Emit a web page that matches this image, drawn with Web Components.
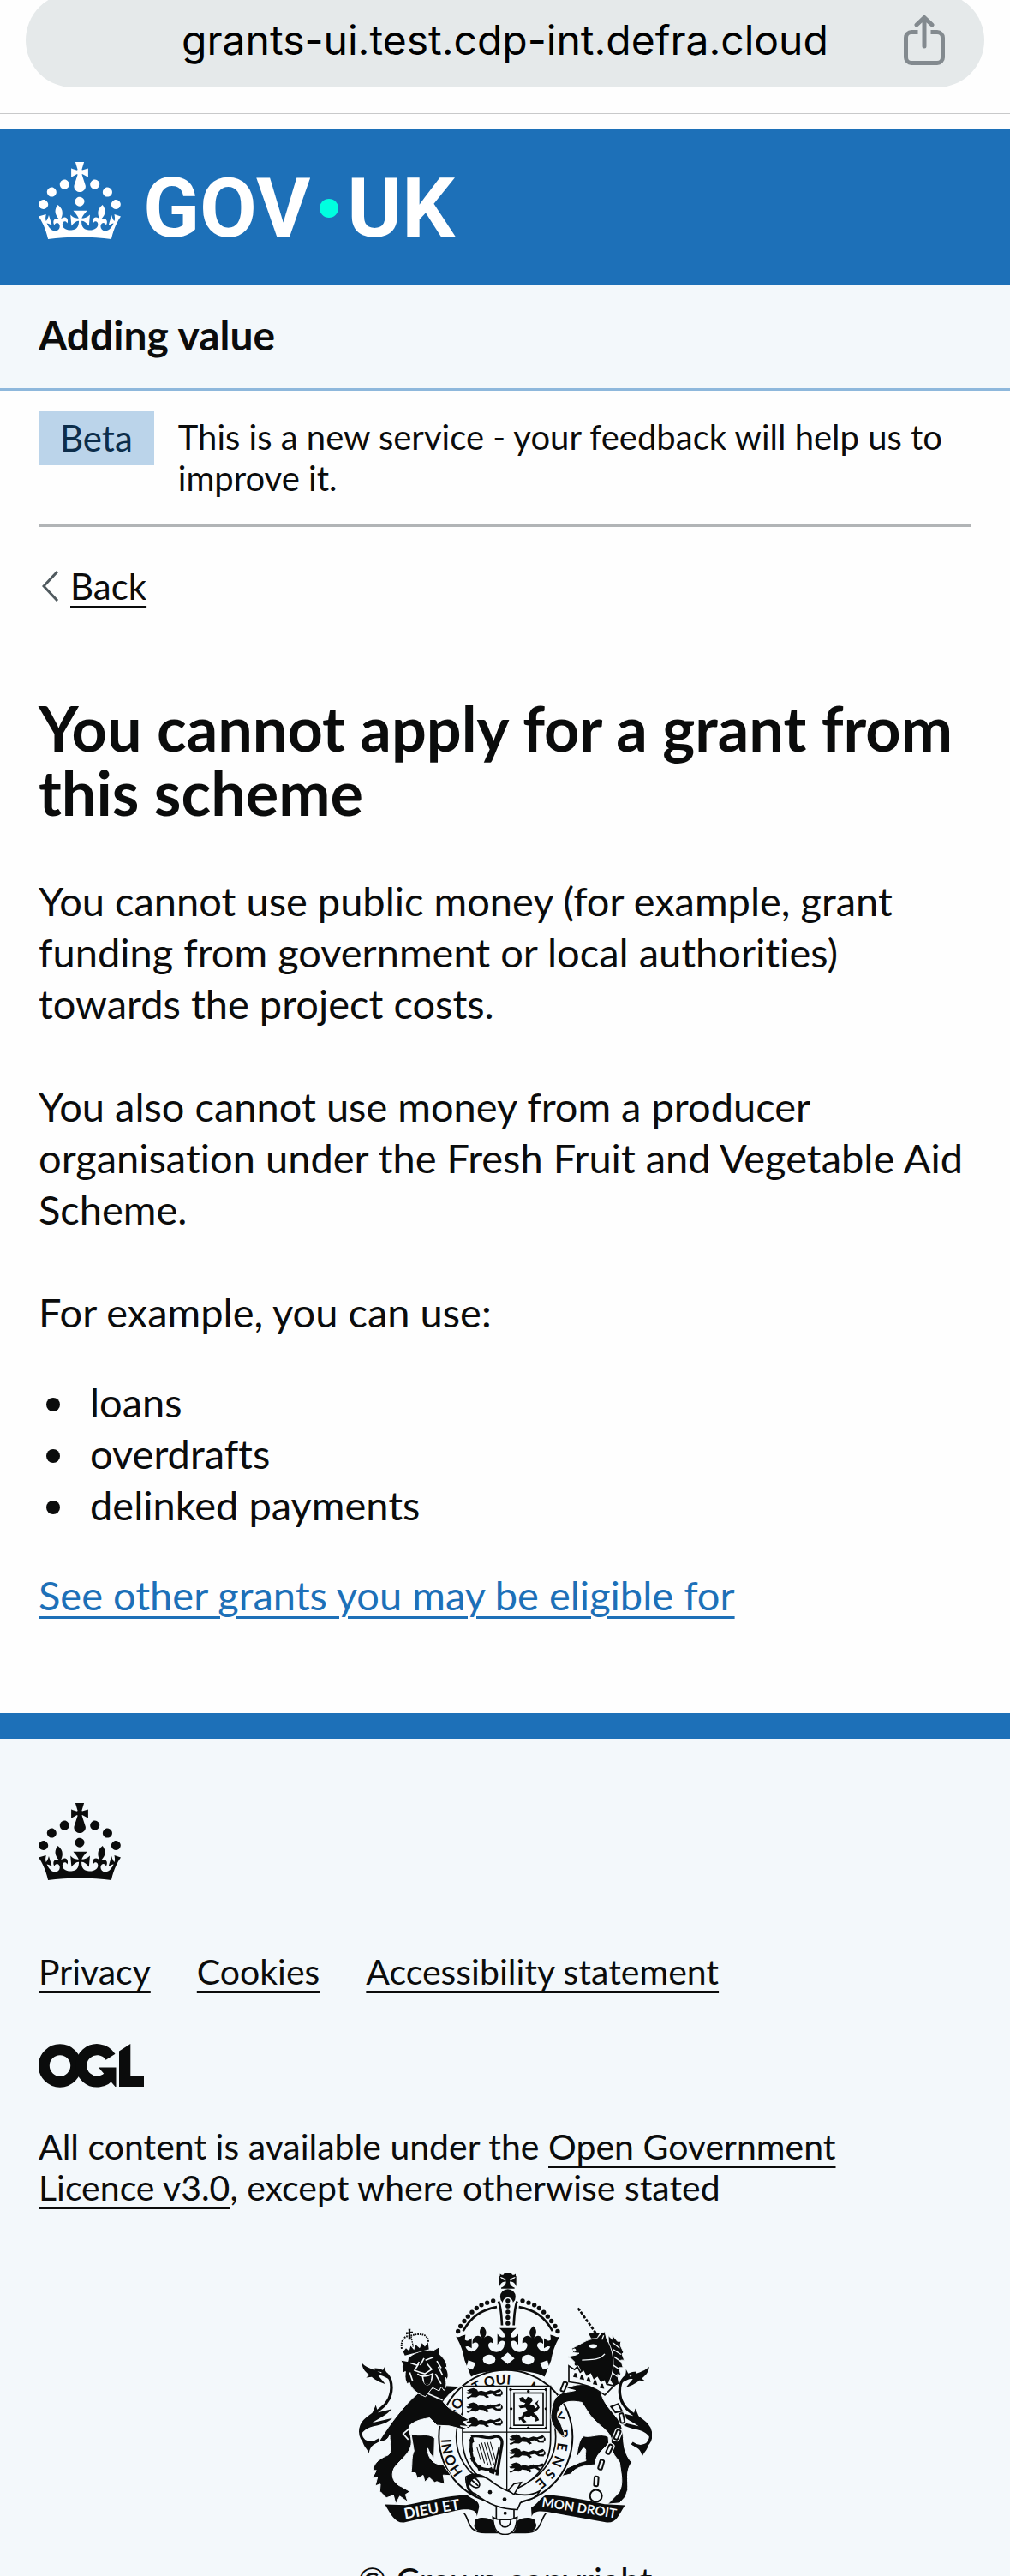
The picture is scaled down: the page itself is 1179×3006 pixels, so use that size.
<!DOCTYPE html>
<html lang="en">
<head>
<meta charset="utf-8">
<meta name="viewport" content="width=device-width, initial-scale=1">
<title>You cannot apply for a grant from this scheme</title>
<style>
:root{
  --blue:#1d70b8; --ink:#0b0c0c; --tint:#f3f8fb; --grey:#b1b4b6;
  --gutter:45px; --rule:3px;
  --body:47px; --body-line:60px;
  --small:41px; --small-line:48px;
}
body{margin:0;background:#fefefe;color:var(--ink);font-family:Lato,"Open Sans",sans-serif;font-variant-ligatures:none;font-size:var(--body);line-height:var(--body-line)}
main{display:block;padding:102px var(--gutter) 108px}
h1{margin:0 0 59px;font-size:72px;line-height:75px;font-weight:700}
main p{margin:0 0 60px}
main p.lead-in{margin-bottom:45px}
main ul{margin:0 0 45px;padding:0;list-style:none}
main li{display:flex;align-items:center}
main li::before{content:"";width:16px;height:16px;border-radius:50%;background:currentColor;margin:5px 35px 0 9px}
main p:last-child{margin:0}
</style>
</head>
<body>
<browser-bar address="grants-ui.test.cdp-int.defra.cloud"></browser-bar>
<gov-header></gov-header>
<service-bar>Adding value</service-bar>
<phase-banner phase="Beta">This is a new service - your feedback will help us to improve it.</phase-banner>
<back-link href="#back">Back</back-link>
<main>
  <h1>You cannot apply for a grant from this scheme</h1>
  <p>You cannot use public money (for example, grant funding from government or local authorities) towards the project costs.</p>
  <p>You also cannot use money from a producer organisation under the Fresh Fruit and Vegetable Aid Scheme.</p>
  <p class="lead-in">For example, you can use:</p>
  <ul><li>loans</li><li>overdrafts</li><li>delinked payments</li></ul>
  <p><text-link href="#grants">See other grants you may be eligible for</text-link></p>
</main>
<gov-footer>
  <text-link slot="links" kind="dark" href="#privacy">Privacy</text-link>
  <text-link slot="links" kind="dark" href="#cookies">Cookies</text-link>
  <text-link slot="links" kind="dark" href="#accessibility">Accessibility statement</text-link>
  <span slot="licence">All content is available under the <text-link kind="dark" href="#ogl">Open Government Licence&nbsp;v3.0</text-link>, except where otherwise stated</span>
  <text-link slot="copyright" kind="plain" href="#copyright">© Crown copyright</text-link>
</gov-footer>

<script>
const define = (name, render) => customElements.define(name, class extends HTMLElement {
  connectedCallback() {
    if (!this.shadowRoot) this.attachShadow({mode: 'open'}).innerHTML = render(this);
  }
});

define('text-link', el => `<style>
:host{display:inline;color:var(--blue)}
:host([kind]){color:var(--ink)}
a{color:inherit;text-decoration:underline;text-decoration-thickness:var(--rule);text-underline-offset:7px}
:host([kind=plain]) a{text-decoration:none}
</style><a href="${el.getAttribute('href')}"><slot></slot></a>`);

define('browser-bar', el => `<style>
:host{display:block;height:132px;overflow:hidden;border-bottom:1px solid #c8c9ca;margin-bottom:17px}
.pill{display:grid;grid-template-columns:1fr auto 1fr;align-items:center;height:110px;margin:-8px 30px 0;border-radius:60px;background:#e5e9ea;padding:0 46px}
button{border:0;background:none;padding:0;margin:0;color:#000;font:48px/60px Inter,sans-serif}
.address{grid-column:2}
.share{justify-self:end;display:flex}
svg{width:48px;height:58px;fill:none;stroke:#838a8f;stroke-width:5;stroke-linecap:butt}
</style><div class="pill"><button class="address">${el.getAttribute('address')}</button>
<button class="share" aria-label="Share"><svg viewBox="0 0 48 58"><path d="M16.500 19.500H9a6.500 6.500 0 0 0-6.500 6.500v23a6.500 6.500 0 0 0 6.500 6.500h30a6.500 6.500 0 0 0 6.500-6.500V26a6.500 6.500 0 0 0-6.500-6.500h-7.500"/><path d="M24 3v33M15 11l9-8.500 9 8.500" stroke-linecap="round" stroke-linejoin="round"/></svg></button></div>`);

define('gov-crown', () => `<style>:host{display:block}svg{display:block;width:96px;height:90px;fill:currentColor}</style>
<svg viewBox="0 0 32 30" aria-hidden="true"><path d="M22.600 10.400c-1 .4-2-.1-2.400-1-.4-.9.1-2 1-2.400.9-.4 2 .1 2.400 1s-.1 2-1 2.400m-5.900 6.700c-.9.4-2-.1-2.400-1-.4-.9.1-2 1-2.400.9-.4 2 .1 2.400 1s-.1 2-1 2.400m10.800-3.700c-1 .4-2-.1-2.400-1-.4-.9.1-2 1-2.400.9-.4 2 .1 2.400 1s0 2-1 2.400m3.300 4.800c-1 .4-2-.1-2.400-1-.4-.9.1-2 1-2.400.9-.4 2 .1 2.400 1s-.1 2-1 2.400M17 4.700l2.300 1.200V2.500l-2.300.7-.2-.2.9-3h-3.400l.9 3-.2.2c-.1.1-2.300-.7-2.300-.7v3.400L15 4.700c.1.1.1.2.2.2l-1.300 4c-.1.2-.1.4-.1.6 0 1.100.8 2 1.900 2.200h.7c1-.2 1.900-1.100 1.900-2.100 0-.2 0-.4-.1-.6l-1.300-4c-.1-.2 0-.2.1-.3m-7.600 5.700c.9.4 2-.1 2.400-1 .4-.9-.1-2-1-2.400-.9-.4-2 .1-2.400 1s0 2 1 2.400m-5 3c.9.4 2-.1 2.400-1 .4-.9-.1-2-1-2.400-.9-.4-2 .1-2.400 1s.1 2 1 2.400m-3.200 4.800c.9.4 2-.1 2.400-1 .4-.9-.1-2-1-2.400-.9-.4-2 .1-2.400 1s0 2 1 2.400m14.800 11c4.400 0 8.600.3 12.300.8 1.100-4.500 2.400-7 3.700-8.800l-2.500-.9c.2 1.300.3 1.900 0 2.700-.4-.4-.8-1.100-1.100-2.300l-1.200 4c.7-.5 1.300-.8 2-.9-1.100 2.500-2.600 3.100-3.500 3-1.100-.2-1.700-1.200-1.500-2.100.3-1.200 1.500-1.500 2.100-.1 1.100-2.300-.8-3-2-2.300 1.900-1.900 2.100-3.500.6-5.600-2.100 1.600-2.100 3.200-1.200 5.500-1.200-1.400-3.200-.6-2.500 1.600.9-1.400 2.100-.5 1.900.8-.2 1.100-1.700 2.100-3.500 1.900-2.700-.2-2.900-2.100-2.900-3.600.7-.1 1.900.5 2.900 1.900l.4-4.300c-1.100 1.100-2.100 1.400-3.200 1.400.4-1.200 2.100-3 2.100-3h-5.400s1.700 1.900 2.100 3c-1.100 0-2.100-.2-3.200-1.400l.4 4.300c1-1.400 2.200-2 2.900-1.900-.1 1.500-.2 3.400-2.900 3.600-1.900.2-3.400-.8-3.500-1.900-.2-1.300 1-2.200 1.900-.8.7-2.300-1.200-3-2.500-1.600.9-2.200.9-3.900-1.200-5.500-1.500 2-1.300 3.700.6 5.600-1.200-.7-3.100 0-2 2.300.6-1.400 1.800-1.100 2.100.1.2.9-.3 1.900-1.500 2.100-.9.2-2.400-.5-3.500-3 .6 0 1.200.3 2 .9l-1.200-4c-.3 1.100-.7 1.900-1.100 2.300-.3-.8-.2-1.400 0-2.700l-2.900.9C1.300 23 2.600 25.500 3.700 30c3.700-.5 7.900-.8 12.300-.8"/></svg>`);

define('gov-header', () => `<style>
:host{display:block;background:var(--blue);color:#fff}
a{display:flex;align-items:flex-start;gap:26px;padding:39px var(--gutter) 54px;color:inherit;text-decoration:none}
.word{display:flex;align-items:center;box-sizing:border-box;font:700 97px/90px Roboto,sans-serif;padding-top:18px;height:90px}
i{width:22px;height:22px;border-radius:50%;background:#00ffe0;margin:0 10px 0 11px}
</style><a href="#home" aria-label="GOV.UK"><gov-crown></gov-crown><span class="word"><span>GOV</span><i></i><span>UK</span></span></a>`);

define('service-bar', () => `<style>
:host{display:block;background:var(--tint);border-bottom:var(--rule) solid #8eb8dc;padding:28px var(--gutter) 32px;font-size:48px;font-weight:700}
a{color:inherit;text-decoration:none}
</style><a href="#service"><slot></slot></a>`);

define('phase-banner', el => `<style>
:host{display:flex;align-items:flex-start;gap:28px;margin:24px var(--gutter) 0;padding-bottom:21px;border-bottom:var(--rule) solid var(--grey);font-size:40px;line-height:var(--small-line)}
strong{flex:none;font-weight:400;font-size:42px;line-height:63px;padding:0 25px;background:#bbd4ea;color:#0c2d4a}
p{margin:0;padding-top:6px;padding-bottom:9px}
</style><strong>${el.getAttribute('phase')}</strong><p><slot></slot></p>`);

define('back-link', el => `<style>
:host{display:block;margin:45px var(--gutter) 0;font-size:42px;line-height:var(--small-line)}
a{display:inline-flex;align-items:center;gap:13px;color:var(--ink);text-decoration:none}
svg{width:20px;height:36px;padding-left:4px;fill:none;stroke:#505a5f;stroke-width:3}
span{text-decoration:underline;text-decoration-thickness:var(--rule);text-underline-offset:7px}
</style><a href="${el.getAttribute('href')}"><svg viewBox="0 0 20 36" aria-hidden="true"><path d="M18 1 2 18l16 17"/></svg><span><slot></slot></span></a>`);

define('ogl-mark', () => `<style>:host{display:block}svg{display:block;width:123px;height:51px}</style>
<svg viewBox="0 0 123 51" role="img" aria-label="Open Government Licence"><g fill="none" stroke="currentColor" stroke-width="13"><circle cx="25" cy="25.500" r="18.700"/><path d="M84 15.200A18.700 18.700 0 1 0 84 35.500"/></g><path fill="currentColor" d="M70 27.500h20.500V50h-1L76 34.500zM94 8.500 107.300 0v37.500H123V50H94z"/></svg>`);

define('royal-arms', () => {
  const pts = [[527,164],[506,171],[486,179],[469,190],[453,204],[439,219],[426,235],[413,253],[404,271]];
  const beads = pts.map(([x,y]) => `<circle cx="${x}" cy="${y}" r="8"/><circle cx="${1157-x}" cy="${y}" r="8"/>`).join('');
  const lion = (x,y) => `<path transform="translate(${x} ${y})" d="M2 8 16 2 25 0 38 5 41 12 52 9 68 13 84 7 98 10 117 3 124 8 116 14 100 16 108 22 123 20 121 29 103 28 90 20 72 24 80 31 72 35 61 27 45 25 35 32 17 31 5 37 1 32 14 27 20 20 5 21 0 15 12 13zM122 9c6 3 8 8 3 16l-4-4z"/>`;
  const rows = [470,520,572].map(y => lion(433,y)).join('') + [632,680,730].map(y => lion(583,y)).join('');
  const tail = `<path d="M128 650C98 672 62 660 62 622 62 555 170 560 171 468 171 430 150 407 112 405" fill="none" stroke="currentColor" stroke-width="10"/><path d="M68 383c22 22 45 20 67 35l14-26c-2 22 10 32 20 52-22-16-34-20-44-18l25 30c-26-8-40-18-48-25l-20 2 12-9c-18-12-26-26-26-41zM62 605c10-24 26-26 42-48l12-28 8 26 48-12c-18 22-48 34-68 48l70-16c-24 26-62 24-85 35-15 8-23 18-27 25zM66 640c20 24 42 24 68 12-25 18-36 16-42 45-8-18-22-24-26-57z"/>`;
  const link = (x,y,r) => `<rect x="-7" y="-17" width="14" height="34" rx="5" transform="translate(${x} ${y}) rotate(${r})"/>`;
  const motto = [['HONI',2],['SO',204],['T QUI',318],['M',508],['Y',634],['P',690],['E',734],['N',778],['S',830],['E',872]].map(([t,o]) => `<text><textPath href="#garter" startOffset="${o}">${t}</textPath></text>`).join('');
  return `<style>:host{display:block}svg{display:block;width:343px;height:306px;overflow:hidden}text{font-family:Lato,sans-serif;font-weight:700;stroke:none}</style>
<svg viewBox="54 66 1029 917" fill="currentColor" role="img" aria-label="Royal coat of arms">
<defs><path id="garter" d="M424 765A187 187 0 1 1 660 806"/><clipPath id="shield"><path d="M420 463H728V650C728 740 670 805 575 835 480 805 420 740 420 650z"/></clipPath></defs>
<g>${tail}<g transform="matrix(-1 0 0 1 1141 12)">${tail}</g></g>
<circle cx="571" cy="641" r="234" fill="var(--tint)" stroke="currentColor" stroke-width="6"/>
<circle cx="572" cy="641" r="174" fill="var(--tint)" stroke="currentColor" stroke-width="5"/>
<g font-size="48">${motto}</g>
<path d="M420 463H728V650C728 740 670 805 575 835 480 805 420 740 420 650z" fill="var(--tint)" stroke="currentColor" stroke-width="5"/>
<path d="M575 463V835M420 624H728" stroke="currentColor" stroke-width="4"/>
<g clip-path="url(#shield)">${rows}</g>
<g fill="none" stroke="currentColor" stroke-width="3"><rect x="588" y="475" width="124" height="135"/><rect x="600" y="487" width="102" height="113" stroke-width="5"/></g>
<g>${[[588,475],[712,475],[588,610],[712,610],[650,481],[650,609],[590,542],[712,542]].map(([x,y])=>`<circle cx="${x}" cy="${y}" r="5"/>`).join('')}</g>
<path d="M618 505 632 500 640 512 648 500 662 504 665 515 655 526 668 530 676 540 682 535 674 522 686 512 682 524 690 538 678 552 668 556 680 566 688 582 672 588 676 578 660 566 652 572 638 568 634 578 644 588 632 592 624 580 618 584 616 572 628 568 632 556 648 550 640 538 622 540 616 532 634 530 640 522 622 516z"/>
<g fill="none" stroke="currentColor"><path d="M450 640C475 630 500 650 525 642 545 632 560 645 558 665L540 775M452 642C445 690 452 735 480 748 505 760 530 750 545 765" stroke-width="10"/><path d="M548 675 528 770" stroke-width="6"/><path d="M478 668V715M488 660V730M498 658V740M508 660V745M518 662V745M528 664V738" stroke-width="3" transform="rotate(-16 503 700)"/></g>
<path d="M443 650l14-6 4 14-12 8zM441 682l14-4 2 14-12 2zM446 714l14-4 6 12-14 6zM470 744l14-4 4 14-12 6zM510 752l12-6 8 26-16-6z"/>
<!-- crown -->
<path d="M551 70C560 78 566 72 566 66H591C591 72 597 78 606 70V80C592 84 588 88 585 93 595 93 602 88 608 76V114C602 100 595 97 585 97 585 106 590 114 602 118V122H555V118C567 114 572 106 572 97 562 97 555 100 549 114V76C555 88 562 93 572 93 569 88 565 84 551 80z"/>
<circle cx="578.500" cy="150" r="27"/><path d="M560 250V176C560 145 597 145 597 176V250z" fill="var(--tint)"/>
${beads}<g>${[164,183,203,223,243].map(y=>`<circle cx="578.500" cy="${y}" r="8"/>`).join('')}</g>
<g fill="none" stroke="currentColor" stroke-width="8"><path d="M546 166C556 190 556 220 558 250M611 166C601 190 601 220 599 250M540 186C485 196 450 220 422 270M617 186C672 196 707 220 735 270"/></g>
<path d="M397 290C410 295 415 285 430 283L428 300C440 310 442 300 452 295L452 330C440 322 434 322 430 325 440 350 465 345 475 325 480 310 462 305 455 315 452 290 475 278 488 295 475 275 480 262 490 253 500 262 510 275 495 295 508 278 532 290 527 315 520 305 505 312 512 328 522 348 555 350 565 325L568 308C558 300 550 305 542 318V280C552 292 560 296 569 290 566 275 558 270 549 260H608C598 270 590 275 588 290 597 296 605 292 615 280V318C607 305 599 300 589 308L592 325C602 350 635 348 645 328 652 312 637 305 630 315 625 290 649 278 662 295 647 275 657 262 668 253 678 262 683 275 670 295 683 278 705 290 702 315 695 305 677 310 682 325 692 345 717 350 727 325 723 322 717 322 705 330L705 295C715 300 717 310 729 300L727 283C742 285 747 295 760 290 742 320 735 345 730 372L707 430C660 400 497 400 450 430L427 372C422 345 415 320 397 290z"/>
<g fill="var(--tint)"><path d="M578 345 602 366 578 386 554 366zM440 372 466 382 455 405 433 398zM717 372 691 382 702 405 724 398z"/><ellipse cx="513" cy="370" rx="22" ry="17"/><ellipse cx="649" cy="370" rx="22" ry="17"/></g>
<!-- lion -->
<g stroke="var(--tint)" stroke-width="3"><path d="M240 630C270 642 298 624 322 645L320 714C304 700 304 690 298 680 296 710 315 740 352 738L380 776 352 774 357 806 330 797 322 800 304 783 288 798 282 775 262 786 255 766 240 766C245 730 240 710 250 690z"/>
<path d="M262 490C215 530 170 590 128 655 150 660 160 645 165 635 165 665 175 690 160 704 135 714 108 730 106 758L118 758 104 785 122 782 114 812 132 806 130 832C145 840 142 850 155 853L178 845 186 875 200 848 228 868 220 842 236 832 208 816C180 805 166 780 180 750 200 720 246 694 240 652 240 630 225 620 235 600 260 580 285 578 305 574L330 600 372 602C392 605 430 620 438 612L412 602 442 604 420 588 444 582 420 568C400 550 375 550 352 518 370 490 395 470 420 464L345 460z"/>
<path d="M203 372 228 376C225 350 300 330 318 338L338 326 338 350C358 370 366 380 365 400L360 395C370 415 372 425 366 440L360 432C364 455 364 465 355 478L345 465 338 480 315 468 290 500C265 490 240 475 234 450L226 455C218 440 218 430 220 412L212 416C210 400 208 390 212 388z"/></g>
<g fill="none" stroke="var(--tint)" stroke-width="5"><path d="M238 382 262 390 268 378M290 372 318 362M266 385 252 408 272 415 288 420 312 404 296 385M262 420C275 432 295 430 318 418M280 430C285 470 310 465 314 425M330 375 345 400M335 395 350 425M325 420 345 455M235 415 245 445M300 490 350 512M235 610 212 630 230 650M285 365 272 390"/></g><path d="M288 432V450C292 462 306 458 307 440" fill="none" stroke="currentColor" stroke-width="5"/>
<path d="M212 342 218 356 302 334 299 310 288 325 278 312 270 330 256 318 250 336 238 322 233 340 222 330zM230 263h8l-1 9h9v6h-9l2 22h-9l1-20-9 2v-8h9z"/><path d="M207 332C202 300 220 285 235 288 270 275 300 280 300 308" fill="none" stroke="currentColor" stroke-width="6" stroke-dasharray="5 3"/><path d="M240 290 247 325" stroke="currentColor" stroke-width="4" stroke-dasharray="5 3"/>
<!-- unicorn -->
<path d="M824 190 886 276" stroke="currentColor" stroke-width="8" stroke-dasharray="11 5"/>
<g stroke="var(--tint)" stroke-width="3"><path d="M845 638C870 645 900 625 930 640L932 662C910 690 885 700 884 738 850 740 815 745 800 770L768 778 785 750 830 730 852 724C845 700 860 680 842 680L818 714C825 670 830 645 845 638z"/>
<path d="M745 505C765 480 790 485 815 478L782 470C830 450 870 452 905 487 915 530 950 556 972 590 992 640 970 680 1012 730 990 760 1000 790 998 826L990 850 970 872 928 876 968 835C985 800 975 775 970 730 955 705 938 700 940 645 930 612 890 600 860 555L838 520C800 512 765 515 758 545 748 560 748 575 762 590L775 625 778 640C755 635 725 590 729 565 732 540 735 520 745 505z"/>
<path d="M930 286 945 300 944 284 962 306 975 306 972 320 984 345 978 350 986 372 974 372 982 398 968 398 974 425 962 422 968 455 950 465 935 440z"/>
<path d="M803 330C835 318 850 298 890 296L908 276 918 272 925 300C945 330 955 380 942 425L930 456 835 415 825 392C815 395 808 390 812 378L800 366 784 360 816 354 828 348 806 346z"/></g>
<path d="M862 280l18-6 20 4-10 16-20 2z"/>
<g fill="none" stroke="var(--tint)" stroke-width="4"><path d="M838 372C870 370 900 372 918 350M945 310 970 330M948 335 975 352M950 360 976 378M948 390 970 405M943 415 962 430M908 300 914 285"/></g><circle cx="811" cy="337" r="6" fill="var(--tint)"/><ellipse cx="877" cy="323" rx="14" ry="7" fill="var(--tint)"/>
<path d="M792 392 812 405 822 395 832 414 845 405 855 424 870 414 880 436 893 426 905 446 918 438 925 456 950 462 918 494C880 465 840 452 792 448z" fill="var(--tint)" stroke="currentColor" stroke-width="5"/>
<g>${[[815,425],[838,432],[861,440],[884,450],[908,463]].map(([x,y])=>`<path d="M${x-8} ${y+6} ${x-3} ${y-8} ${x+3} ${y-8} ${x+8} ${y+9}z"/>`).join('')}</g>
<g fill="none" stroke="var(--tint)" stroke-width="14">${link(978,575,-12)}${link(962,633,22)}${link(934,684,25)}${link(905,738,16)}${link(888,796,4)}</g>
<g fill="none" stroke="currentColor" stroke-width="6">${link(775,465,22)}${link(978,575,-12)}${link(962,633,22)}${link(934,684,25)}${link(905,738,16)}${link(888,796,4)}<path d="M940 535 965 525 978 550 955 555z"/><circle cx="887" cy="847" r="21"/></g>
<!-- garter strap and scroll -->
<g fill="var(--tint)" stroke="currentColor" stroke-width="5"><path d="M425 908C445 925 432 976 500 976H640C700 976 690 930 712 908"/><path d="M538 875H600V930H538z"/>
<path d="M432 780C460 760 500 778 530 803 570 830 635 862 690 830 670 870 640 855 622 872L612 895C555 895 510 878 465 840 445 835 428 805 432 780z"/><path d="M580 828 600 805 625 800 600 842z"/>
<path d="M526 922C545 935 545 925 552 930 545 965 592 965 588 930L611 922C608 965 595 982 569 982 542 982 528 965 526 922z"/><ellipse cx="460" cy="800" rx="23" ry="14" transform="rotate(40 460 800)"/><path d="M450 790 475 812"/></g>
<g><circle cx="516" cy="834" r="7"/><circle cx="567" cy="859" r="7"/><circle cx="569" cy="908" r="6"/><path d="M434 785C440 765 480 765 505 785 470 780 448 782 444 815 450 835 470 850 482 856 445 850 425 820 434 785zM465 930C485 918 515 925 528 935 530 955 535 970 542 977H500C475 975 455 960 462 945zM672 930C650 918 625 925 611 935 608 955 604 970 598 977H640C670 975 685 955 675 940z"/>
<path d="M148 877 222 879C300 865 370 845 436 844 450 858 478 860 478 885L470 920C472 895 440 890 400 898L215 940C185 943 170 915 148 877z"/><path d="M989 880 918 876C850 862 770 845 712 844 690 855 685 875 660 888L662 920C670 895 700 900 740 907L925 940C960 942 965 915 989 880z"/></g>
<g fill="var(--tint)"><text x="218" y="928" font-size="52" transform="rotate(-10 218 928)">DIEU ET</text><text x="696" y="884" font-size="45" transform="rotate(9 696 884)">MON DROIT</text></g>
</svg>`;
});

define('gov-footer', () => `<style>
:host{display:block;background:var(--tint);border-top:30px solid var(--blue);padding:75px var(--gutter) 45px;font-size:var(--small);line-height:var(--small-line)}
nav{display:flex;flex-wrap:wrap;column-gap:54px;margin:83px 0 60px}
.licence{margin:45px 0 75px}
.arms{display:flex;flex-direction:column;align-items:center;gap:29px}
</style><gov-crown></gov-crown>
<nav aria-label="Support links"><slot name="links"></slot></nav>
<ogl-mark></ogl-mark>
<div class="licence"><slot name="licence"></slot></div>
<div class="arms"><royal-arms></royal-arms><slot name="copyright"></slot></div>`);
</script>
</body>
</html>
